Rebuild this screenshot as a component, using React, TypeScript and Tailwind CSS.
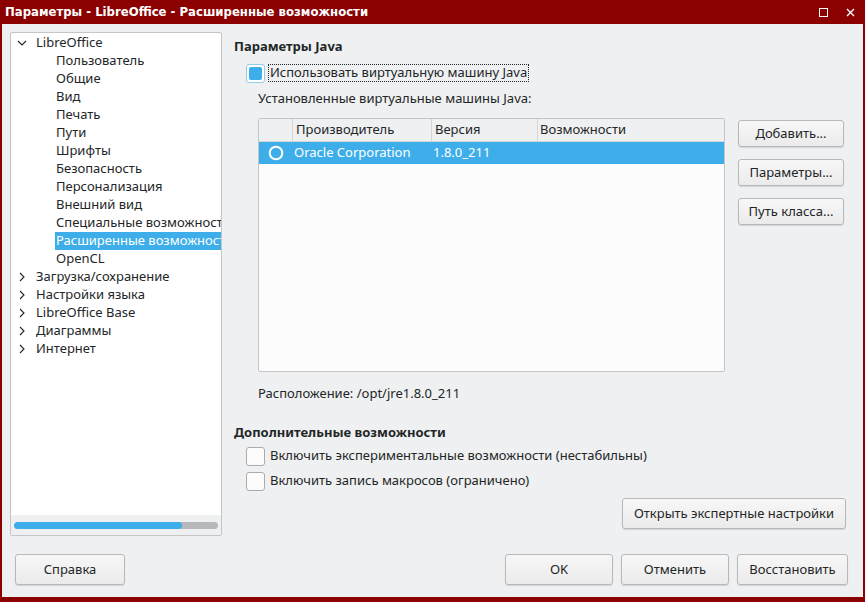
import React from "react";

const font = { fontFamily: '"Noto Sans", "DejaVu Sans", sans-serif' };

function Btn({ w, h = 30, children }: { w: number; h?: number; children: React.ReactNode }) {
  return (
    <div
      className="flex items-center justify-center rounded-[3px] border border-[#b6b8ba] bg-gradient-to-b from-[#f7f7f7] to-[#ebebeb] text-[13px] text-[#232627] shadow-[0_1px_1px_rgba(0,0,0,0.12)]"
      style={{ width: w, height: h }}
    >
      {children}
    </div>
  );
}

function Chevron({ down }: { down?: boolean }) {
  return down ? (
    <svg width="12" height="12" viewBox="0 0 12 12" className="text-[#232627]">
      <path d="M2 4 L6 8 L10 4" fill="none" stroke="currentColor" strokeWidth="1.1" />
    </svg>
  ) : (
    <svg width="12" height="12" viewBox="0 0 12 12" className="text-[#232627]">
      <path d="M4 2 L8 6 L4 10" fill="none" stroke="currentColor" strokeWidth="1.1" />
    </svg>
  );
}

function Unchecked() {
  return <div className="h-[19px] w-[19px] rounded-[3px] border border-[#a9abad] bg-[#fcfcfc]" />;
}

export default function App() {
  const children = [
    "Пользователь",
    "Общие",
    "Вид",
    "Печать",
    "Пути",
    "Шрифты",
    "Безопасность",
    "Персонализация",
    "Внешний вид",
    "Специальные возможности",
    "Расширенные возможности",
    "OpenCL",
  ];
  const tops = ["Загрузка/сохранение", "Настройки языка", "LibreOffice Base", "Диаграммы", "Интернет"];

  return (
    <div className="flex h-[602px] w-[865px] flex-col bg-[#8b0000]" style={font}>
      {/* title bar */}
      <div className="flex h-[24px] shrink-0 items-center justify-between pl-[5px] pr-[10px] text-white">
        <span
          className="text-[13px] font-bold"
          style={{ fontFamily: '"DejaVu Sans Condensed", "Liberation Sans Narrow", sans-serif' }}
        >
          Параметры - LibreOffice - Расширенные возможности
        </span>
        <div className="flex items-center gap-[18px]">
          <div className="h-[9px] w-[9px] border-[1.5px] border-white" />
          <svg width="9" height="9" viewBox="0 0 9 9">
            <path d="M1 1 L8 8 M8 1 L1 8" stroke="white" strokeWidth="1.4" />
          </svg>
        </div>
      </div>

      {/* body */}
      <div className="mx-[2px] mb-[5px] flex flex-1 flex-col bg-[#eff0f1] pl-[8px] pr-[15px] pt-[8px] text-[13px] text-[#232627]">
        <div className="flex h-[504px]">
          {/* tree */}
          <div className="relative flex w-[212px] shrink-0 flex-col overflow-hidden rounded-[2px] border border-[#c3c5c7] bg-white pt-[1px]">
            <div className="flex h-[18px] items-center pl-[5px]">
              <Chevron down />
              <span className="ml-[8px] whitespace-nowrap">LibreOffice</span>
            </div>
            {children.map((c) => (
              <div key={c} className="flex h-[18px] items-center pl-[44px]">
                <span
                  className={
                    "flex h-[18px] flex-1 items-center whitespace-nowrap pl-[1px] " +
                    (c === "Расширенные возможности" ? "bg-[#3daee9] text-white" : "")
                  }
                >
                  {c}
                </span>
              </div>
            ))}
            {tops.map((c) => (
              <div key={c} className="flex h-[18px] items-center pl-[5px]">
                <Chevron />
                <span className="ml-[8px] whitespace-nowrap">{c}</span>
              </div>
            ))}
            <div className="flex-1" />
            <div className="flex h-[20px] items-center bg-[#eff0f1] px-[3px]">
              <div className="flex h-[7px] w-full overflow-hidden rounded-full bg-[#b6b8ba]">
                <div className="h-full w-[168px] rounded-full bg-[#3daee9]" />
              </div>
            </div>
          </div>

          {/* right panel */}
          <div className="ml-[12px] flex flex-1 flex-col">
            <div className="mt-[6px] flex h-[18px] items-center font-bold">Параметры Java</div>
            <div className="mt-[7px] flex h-[20px] items-center pl-[12px]">
              <div className="flex h-[19px] w-[19px] items-center justify-center rounded-[3px] border border-[#8fcdec] bg-white">
                <div className="h-[13px] w-[13px] rounded-[2px] bg-[#3daee9]" />
              </div>
              <span className="ml-[3px] flex h-[18px] items-center border border-dotted border-[#232627] px-[1px]">
                Использовать виртуальную машину Java
              </span>
            </div>
            <div className="mt-[7px] flex h-[18px] items-center pl-[24px]">Установленные виртуальные машины Java:</div>

            <div className="mt-[10px] flex pl-[24px]">
              <div className="flex h-[254px] w-[467px] flex-col rounded-[2px] border border-[#c3c5c7] bg-[#fcfcfc]">
                <div className="flex h-[23px] border-b border-[#d4d5d6] bg-[#eff0f1]">
                  <div className="w-[34px] border-r border-[#d4d5d6]" />
                  <div className="flex w-[139px] items-center border-r border-[#d4d5d6] pl-[3px]">Производитель</div>
                  <div className="flex w-[106px] items-center border-r border-[#d4d5d6] pl-[3px]">Версия</div>
                  <div className="flex flex-1 items-center pl-[2px]">Возможности</div>
                </div>
                <div className="flex h-[22px] items-center bg-[#3daee9] text-white">
                  <div className="flex w-[34px] items-center justify-center">
                    <svg width="16" height="16" viewBox="0 0 16 16">
                      <circle cx="8" cy="8" r="6.3" fill="none" stroke="white" strokeWidth="2" />
                    </svg>
                  </div>
                  <div className="w-[139px] pl-[1px]">Oracle Corporation</div>
                  <div className="w-[106px] pl-[1px]">1.8.0_211</div>
                </div>
              </div>
              <div className="ml-[13px] mt-[2px] flex flex-col gap-[12px]">
                <Btn w={106} h={27}>Добавить...</Btn>
                <Btn w={106} h={27}>Параметры...</Btn>
                <Btn w={106} h={27}>Путь класса...</Btn>
              </div>
            </div>

            <div className="mt-[13px] flex h-[18px] items-center pl-[24px]">Расположение: /opt/jre1.8.0_211</div>
            <div className="mt-[21px] flex h-[18px] items-center font-bold">Дополнительные возможности</div>
            <div className="mt-[4px] flex h-[20px] items-center pl-[12px]">
              <Unchecked />
              <span className="ml-[5px]">Включить экспериментальные возможности (нестабильны)</span>
            </div>
            <div className="mt-[5px] flex h-[20px] items-center pl-[12px]">
              <Unchecked />
              <span className="ml-[5px]">Включить запись макросов (ограничено)</span>
            </div>
            <div className="mt-[7px] flex justify-end pr-[2px]">
              <Btn w={224} h={31}>Открыть экспертные настройки</Btn>
            </div>
          </div>
        </div>

        {/* bottom buttons */}
        <div className="mt-[18px] flex items-center">
          <div className="ml-[5px]">
            <Btn w={110} h={31}>Справка</Btn>
          </div>
          <div className="flex-1" />
          <div className="flex gap-[8px]">
            <Btn w={108} h={31}>OK</Btn>
            <Btn w={108} h={31}>Отменить</Btn>
            <Btn w={111} h={31}>Восстановить</Btn>
          </div>
        </div>
      </div>
    </div>
  );
}
